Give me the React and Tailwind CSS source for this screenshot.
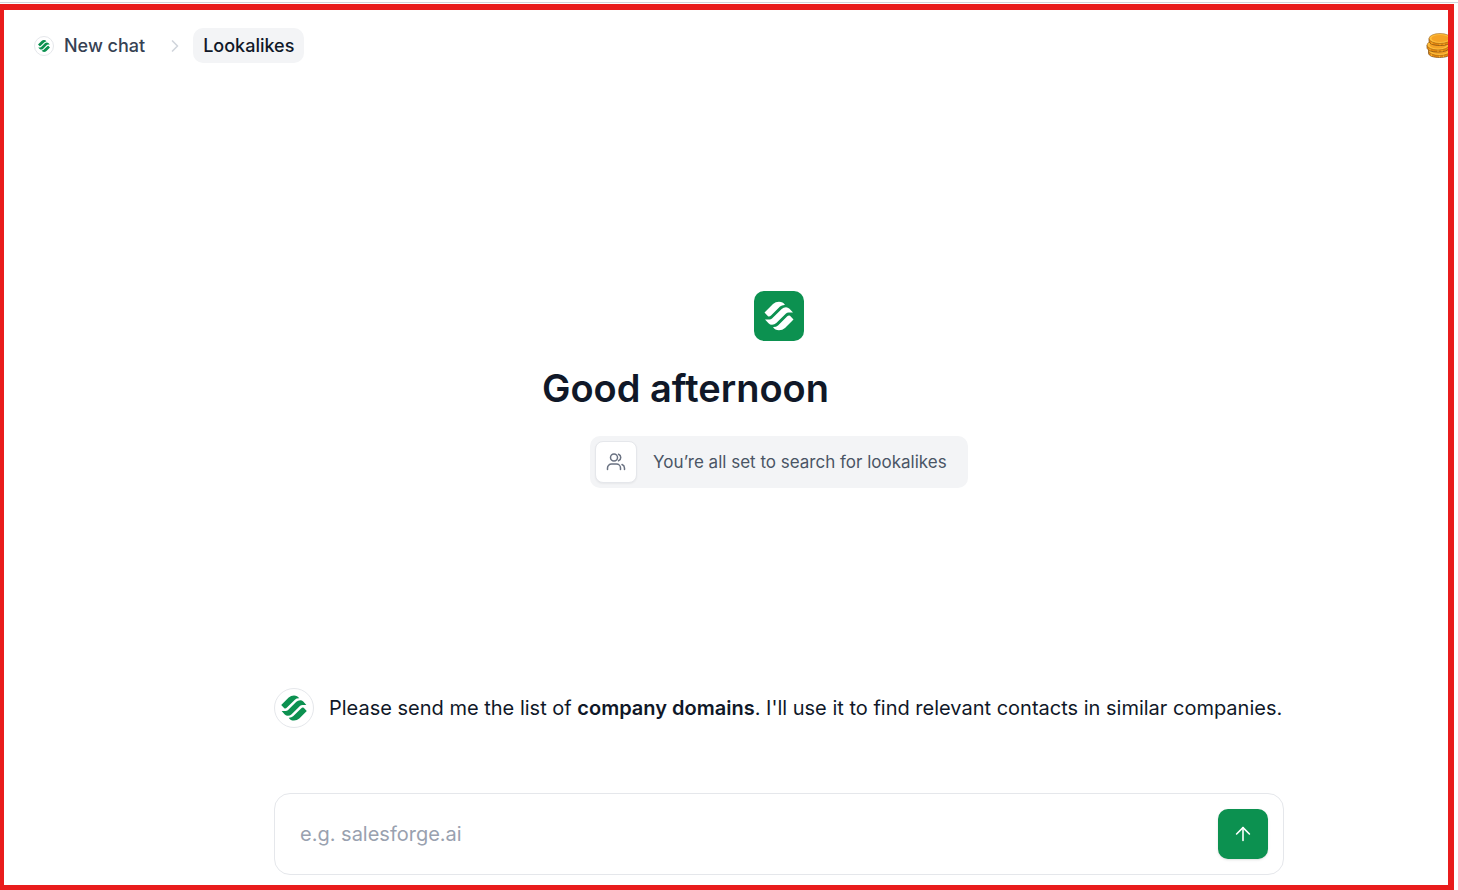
import { ArrowUp, ChevronRight } from "lucide-react";

const hook =
  "M2.500 13.500L11 5Q13.500 2.700 17 2.700Q21 2.700 23 6Q20 5.800 18 7.600L9 16.500Q7.500 18 6 17.300Z";

function Logo({ className }) {
  return (
    <svg viewBox="0 0 34 34" fill="currentColor" className={className} aria-hidden="true">
      <path d={hook} />
      <path d={hook} transform="rotate(180 17 17)" />
      <path d="M3 20.500H7.500Q9 20.500 10 19.600L19.700 9.900Q21.500 8.200 24 8.200Q26 8.200 27.500 9.700L31 13.500H26.500Q25 13.500 24 14.400L14.300 24.100Q12.500 25.800 10 25.800Q8 25.800 6.500 24.300Z" />
    </svg>
  );
}

const coins = [
  { x: 13.5, y: 17.5 },
  { x: 12, y: 12 },
  { x: 14, y: 5.5 },
];

function CoinStack() {
  return (
    <svg viewBox="0 0 26 26" className="size-[26px]" aria-hidden="true">
      {coins.map(({ x, y }) => (
        <g key={y} transform={`translate(${x} ${y})`}>
          <path
            d="M-11 0v2.500C-11 5.500-6 7-0 7S11 5.500 11 2.500V0z"
            fill="#e8890c"
            stroke="#7a4a14"
            strokeWidth="0.700"
          />
          <path d="M-8 3.500v2M0 5v1.700M4 4.800v1.700" stroke="#fbb02c" strokeWidth="1.200" />
          <ellipse rx="11" ry="5" fill="#ffbd3a" stroke="#8f5414" strokeWidth="0.500" />
          <ellipse rx="8.500" ry="3.400" fill="#f5a226" />
        </g>
      ))}
    </svg>
  );
}

function UsersIcon() {
  return (
    <svg viewBox="0 0 20 20" fill="none" stroke="currentColor" strokeWidth="1.500" strokeLinecap="round" strokeLinejoin="round" className="size-5" aria-hidden="true">
      <circle cx="8" cy="5.500" r="3.500" />
      <path d="M1.500 17.500V16a4 4 0 0 1 4-4h5a4 4 0 0 1 4 4v1.500M12.500 2.300a3.400 3.400 0 0 1 0 6.400M16 12.500a4 4 0 0 1 2.500 3.500v1.500" />
    </svg>
  );
}

export default function App() {
  return (
    <div className="flex min-h-screen flex-col bg-white pt-[2px] pr-1 font-['Inter',sans-serif] text-gray-900">
      <div className="-mr-1 mb-px h-px bg-gray-300" />
      <div className="flex flex-1 flex-col overflow-hidden border-[6px] border-b-[5px] border-l-4 border-[#e91c1c]">
        <header className="flex items-center justify-between py-[18px] pl-[30px]">
          <nav className="flex items-center text-lg font-medium">
            <a href="#new" className="flex items-center gap-2.5 text-gray-700">
              <span className="flex size-5 items-center justify-center rounded-full border border-gray-200 text-[#0c9150]">
                <Logo className="size-3.5" />
              </span>
              New chat
            </a>
            <ChevronRight className="mr-2 ml-5 size-5 text-gray-300" strokeWidth={2} />
            <a href="#lookalikes" aria-current="page" className="flex h-[35px] items-center rounded-[10px] bg-gray-100 px-2.5 text-gray-900">
              Lookalikes
            </a>
          </nav>
          <div className="-mr-1 shrink-0">
            <CoinStack />
          </div>
        </header>

        <div className="flex flex-1 flex-col pl-[106px]">
          <main className="mx-auto flex w-full max-w-[1010px] flex-1 flex-col">
            <section className="flex flex-1 flex-col items-center justify-center pt-2.5">
              <div className="flex size-[50px] items-center justify-center rounded-[10px] bg-[#0c9150] text-white">
                <Logo className="size-[34px]" />
              </div>
              <h1 className="mt-6 w-[474px] text-[38px] leading-[47px] font-semibold">Good afternoon</h1>
              <div className="mt-6 flex h-[52px] w-[378px] items-center gap-4 rounded-[10px] bg-gray-100 pl-[5px] text-[17px] leading-7 text-gray-600">
                <span className="flex size-[42px] items-center justify-center rounded-lg border border-gray-200 bg-white text-gray-500 shadow-xs">
                  <UsersIcon />
                </span>
                You’re all set to search for lookalikes
              </div>
            </section>

            <div className="flex items-center gap-[15px]">
              <span className="flex size-10 shrink-0 items-center justify-center rounded-full border border-gray-200 text-[#0c9150]">
                <Logo className="size-[30px]" />
              </span>
              <p className="text-xl">
                Please send me the list of <strong className="font-semibold">company domains</strong>. I'll use it to find relevant contacts in similar companies.
              </p>
            </div>

            <form className="mt-[65px] mb-2.5 flex h-[82px] items-center rounded-2xl border border-gray-200 pr-[15px] pl-[25px]">
              <input
                type="text"
                aria-label="Company domains"
                placeholder="e.g. salesforge.ai"
                className="min-w-0 flex-1 text-xl outline-none placeholder:text-gray-400"
              />
              <button type="button" aria-label="Send" className="flex size-[50px] items-center justify-center rounded-[10px] bg-[#0c9150] text-white shadow-sm">
                <ArrowUp className="size-[22px]" strokeWidth={1.75} />
              </button>
            </form>
          </main>
        </div>
      </div>
    </div>
  );
}
